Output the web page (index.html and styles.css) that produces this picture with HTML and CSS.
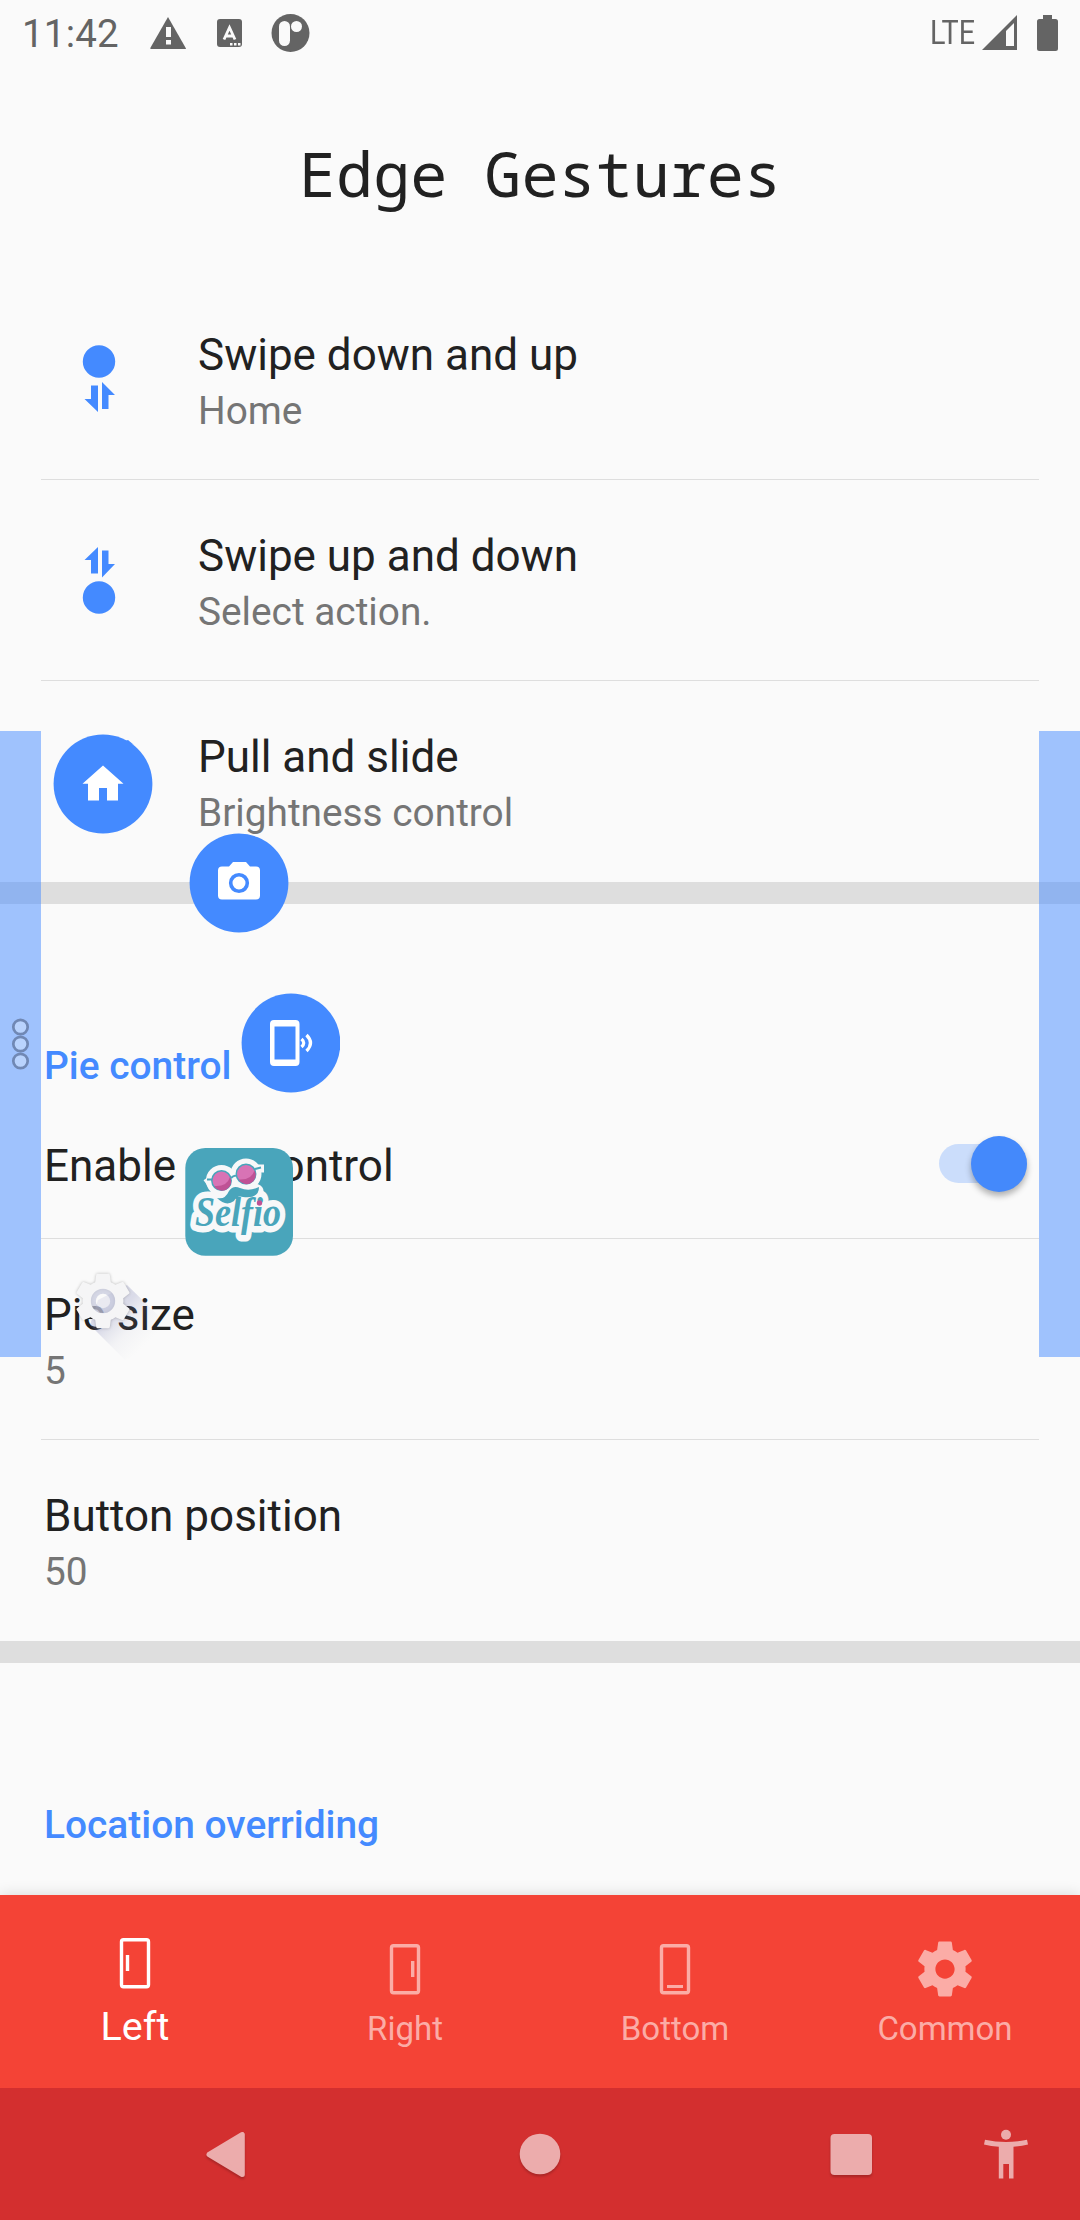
FILE: index.html
```html
<!DOCTYPE html>
<html lang="en">
<head>
<meta charset="utf-8">
<title>Edge Gestures</title>
<link rel="stylesheet" href="styles.css">
</head>
<body>
<div class="screen">
  <header class="status">
    <span class="clock">11:42</span>
    <svg class="st-icons" width="170" height="66" viewBox="0 0 170 66">
      <path fill="#646464" d="M18 17 36 48.500Q36 49 35 49H1Q0 49 .3 48Z"/>
      <path fill="#fafafa" d="M16 27h5v10h-5zM16 40h5v4.500h-5z"/>
      <rect x="67" y="19" width="25" height="28" rx="3" fill="#646464"/>
      <path d="M74 39.500 79.500 27.500 85 39.500M76 36h7" fill="none" stroke="#fafafa" stroke-width="2.800"/>
      <path fill="#fafafa" d="M80 43h2.500v2.500H80zM84 43h2.500v2.500H84zM88 43h2.500v2.500H88z"/>
      <circle cx="140.500" cy="33" r="19" fill="#646464"/>
      <rect x="129" y="21" width="11" height="25" rx="5.500" fill="#fafafa"/>
      <circle cx="146.500" cy="26.500" r="5.500" fill="#fafafa"/>
    </svg>
    <span class="spacer"></span>
    <span class="lte">LTE</span>
    <svg class="st-right" width="80" height="66" viewBox="0 0 80 66">
      <path fill="#646464" fill-rule="evenodd" d="M2 50 37 15V50ZM26 31V46H34V23Z"/>
      <path fill="#646464" d="M63 15h9v4h3.500q2.500 0 2.500 2.500v27q0 2.500-2.500 2.500h-16q-2.500 0-2.500-2.500v-27q0-2.500 2.500-2.500H63z"/>
    </svg>
  </header>

  <h1 class="title">Edge Gestures</h1>

  <main class="content">
    <div class="row">
      <svg class="row-icon" width="116" height="200" viewBox="0 0 116 200" fill="#448aff">
        <circle cx="58" cy="82.500" r="16.200"/>
        <path d="M50 106.500h7V133L43.500 120H50zM61 103 74 116h-6.500v14H61z"/>
      </svg>
      <div class="row-text"><div class="name">Swipe down and up</div><div class="sub">Home</div></div>
    </div>
    <div class="row">
      <svg class="row-icon" width="116" height="200" viewBox="0 0 116 200" fill="#448aff">
        <path d="M57 67v26.500h-7V80h-6.500zM61 70.500h6.500V84H74L61 97.500z"/>
        <circle cx="58" cy="117.500" r="16.200"/>
      </svg>
      <div class="row-text"><div class="name">Swipe up and down</div><div class="sub">Select action.</div></div>
    </div>
    <div class="row last">
      <span class="row-icon-gap"></span>
      <div class="row-text"><div class="name">Pull and slide</div><div class="sub">Brightness control</div></div>
    </div>
    <div class="band"></div>
    <h2 class="section">Pie control</h2>
    <div class="row compact">
      <div class="name">Enable pie control</div>
      <span class="toggle"><span class="thumb"></span></span>
    </div>
    <div class="row">
      <div class="row-text"><div class="name">Pie size</div><div class="sub">5</div></div>
    </div>
    <div class="row last">
      <div class="row-text"><div class="name">Button position</div><div class="sub">50</div></div>
    </div>
    <div class="band"></div>
    <h2 class="section">Location overriding</h2>
  </main>

  <nav class="tabs">
    <div class="tab active">
      <svg width="66" height="66" viewBox="0 0 66 66"><rect x="19.500" y="9.700" width="27" height="47" rx="2" fill="none" stroke="currentColor" stroke-width="3.400"/><path d="M25.500 25v16" stroke="currentColor" stroke-width="3.400"/></svg>
      <span>Left</span>
    </div>
    <div class="tab">
      <svg width="66" height="66" viewBox="0 0 66 66"><rect x="19.500" y="9.700" width="27" height="47" rx="2" fill="none" stroke="currentColor" stroke-width="3.400"/><path d="M40.700 25v16" stroke="currentColor" stroke-width="3.400"/></svg>
      <span>Right</span>
    </div>
    <div class="tab">
      <svg width="66" height="66" viewBox="0 0 66 66"><rect x="19.500" y="9.700" width="27" height="47" rx="2" fill="none" stroke="currentColor" stroke-width="3.400"/><path d="M25 50.500h16" stroke="currentColor" stroke-width="3"/></svg>
      <span>Bottom</span>
    </div>
    <div class="tab">
      <svg width="66" height="66" viewBox="0 0 24 24"><path fill="currentColor" d="M19.430 12.980c.04-.32.07-.64.07-.98s-.03-.66-.07-.98l2.110-1.650c.19-.15.24-.42.12-.64l-2-3.460c-.12-.22-.39-.3-.61-.22l-2.490 1c-.52-.4-1.080-.73-1.690-.98l-.38-2.650C14.460 2.180 14.250 2 14 2h-4c-.25 0-.46.18-.49.42l-.38 2.650c-.61.25-1.170.59-1.690.98l-2.490-1c-.23-.09-.49 0-.61.22l-2 3.460c-.13.22-.07.49.12.64l2.110 1.650c-.04.32-.07.65-.07.98s.03.66.07.98l-2.110 1.650c-.19.15-.24.42-.12.64l2 3.460c.12.22.39.3.61.22l2.490-1c.52.4 1.080.73 1.690.98l.38 2.650c.03.24.24.42.49.42h4c.25 0 .46-.18.49-.42l.38-2.650c.61-.25 1.170-.59 1.690-.98l2.490 1c.23.09.49 0 .61-.22l2-3.460c.12-.22.07-.49-.12-.64l-2.110-1.650zM12 15.500c-1.930 0-3.500-1.570-3.500-3.500s1.570-3.500 3.500-3.500 3.500 1.570 3.500 3.500-1.570 3.500-3.500 3.500z"/></svg>
      <span>Common</span>
    </div>
  </nav>

  <footer class="sysnav">
    <svg width="60" height="60" viewBox="0 0 60 60"><path d="M10 30.500 43.300 10.500V50.500Z" fill="#ecacac" stroke="#ecacac" stroke-width="5" stroke-linejoin="round"/></svg>
    <svg width="60" height="60" viewBox="0 0 60 60"><circle cx="30" cy="30" r="20.300" fill="#ecacac"/></svg>
    <svg width="60" height="60" viewBox="0 0 60 60"><rect x="9.500" y="10" width="41.500" height="41" rx="4" fill="#ecacac"/></svg>
    <svg class="a11y" width="60" height="60" viewBox="0 0 60 60" fill="#ecacac"><circle cx="30" cy="10.700" r="5"/><path d="M9 15.700Q30 20.300 51 15.700L52 20.500Q45 22.300 37.500 22.700V54.500H33V40H27.300V54.500H22.800V22.700Q15 22.300 8 20.500Z"/></svg>
  </footer>

  <div class="edge edge-left">
    <svg width="41" height="60" viewBox="0 0 41 60" fill="rgba(255,255,255,.28)" stroke="#7088b4" stroke-width="2.700"><circle cx="20.500" cy="13" r="7.200"/><circle cx="20.500" cy="30" r="7.200"/><circle cx="20.500" cy="47" r="7.200"/></svg>
  </div>
  <div class="edge edge-right"></div>

  <svg class="pie" width="300" height="680" viewBox="40 720 300 680">
    <defs>
      <linearGradient id="cast" gradientUnits="userSpaceOnUse" x1="103" y1="1301" x2="146" y2="1344"><stop offset=".3" stop-color="#7478b0" stop-opacity=".24"/><stop offset=".65" stop-color="#a0a4c0" stop-opacity=".08"/><stop offset="1" stop-color="#a0a4b8" stop-opacity="0"/></linearGradient>
    </defs>
    <circle cx="103" cy="784" r="49.400" fill="#448aff"/>
    <path d="M125 741l3-1 6 5z" fill="#448aff"/>
    <path fill="#fff" d="M103 765.500 123.500 783.700H118V800.500H107V788H99V800.500H88V783.700H82.500Z"/>
    <circle cx="239" cy="883" r="49.400" fill="#448aff"/>
    <path fill="#fff" d="M233 862h13l4 4.500h6q4 0 4 4v25q0 4-4 4h-34q-4 0-4-4v-25q0-4 4-4h7z"/>
    <circle cx="239" cy="883" r="8.300" fill="#fff" stroke="#448aff" stroke-width="3.600"/>
    <circle cx="291" cy="1043" r="49.400" fill="#448aff"/>
    <path fill="#fff" fill-rule="evenodd" d="M274 1020h21.500q4 0 4 4v38q0 4-4 4H274q-4 0-4-4v-38q0-4 4-4zM274.500 1026.500v33h21v-33z"/>
    <path d="M301.500 1039q4.500 4 0 8M306.500 1035q8 8 0 16" fill="none" stroke="#fff" stroke-width="3.200"/>
    <rect x="185.300" y="1148" width="107.700" height="107.800" rx="20" fill="#49a5bb"/>
    <g fill="#f7f8f9" stroke="#f7f8f9" stroke-width="6" stroke-linejoin="round">
      <circle cx="221.500" cy="1180.500" r="12.500"/><circle cx="246" cy="1174" r="12.500"/>
      <path d="M206 1178.500l5 7M261 1164.500l0 8M210 1181l10-8M248 1165l12 3"/>
      <path d="M216 1199l12-8q5-6 10-3 12 2 19-1 5 2 3 8l6 12-25 10-34-6z"/>
    </g>
    <text class="selfio" x="238" y="1226" text-anchor="middle" textLength="86" lengthAdjust="spacingAndGlyphs">Selfio</text>
    <path d="M207 1179.500l6 0M231 1178q3-3 5-2M255 1169l6-1.500" fill="none" stroke="#49a5bb" stroke-width="2"/>
    <g stroke="#49a5bb" stroke-width="1.500"><circle cx="221.500" cy="1180.500" r="9.700" fill="#d873b5"/><circle cx="246" cy="1174" r="9.700" fill="#d873b5"/></g>
    <path fill="#bf5295" d="M230 1177a9 9 0 0 1-16 9q13 1 16-9zM254.500 1170.500a9 9 0 0 1-16 9q13 1 16-9z"/>
    <path fill="#49a5bb" d="M217 1198q8 2 12-7 4-6 11-3 9 4 19-1 0 12-16 10-6-2-9 4-8 6-17-3z"/>
    <circle cx="259.500" cy="1203" r="2.700" fill="#bf5295"/>
    <path fill="url(#cast)" d="M127 1285 168 1325 160 1345 125 1360 90 1325 98 1300z"/>
    <g transform="translate(103 1301) scale(2.720) translate(-12 -12)">
      <path class="gear" d="M19.430 12.980c.04-.32.07-.64.07-.98s-.03-.66-.07-.98l2.110-1.650c.19-.15.24-.42.12-.64l-2-3.460c-.12-.22-.39-.3-.61-.22l-2.490 1c-.52-.4-1.080-.73-1.690-.98l-.38-2.650C14.460 2.180 14.250 2 14 2h-4c-.25 0-.46.18-.49.42l-.38 2.650c-.61.25-1.170.59-1.690.98l-2.490-1c-.23-.09-.49 0-.61.22l-2 3.460c-.13.22-.07.49.12.64l2.110 1.650c-.04.32-.07.65-.07.98s.03.66.07.98l-2.110 1.650c-.19.15-.24.42-.12.64l2 3.460c.12.22.39.3.61.22l2.490-1c.52.4 1.080.73 1.690.98l.38 2.650c.03.24.24.42.49.42h4c.25 0 .46-.18.49-.42l.38-2.650c.61-.25 1.170-.59 1.690-.98l2.490 1c.23.09.49 0 .61-.22l2-3.460c.12-.22.07-.49-.12-.64l-2.110-1.650zM12 16.400a4.400 4.400 0 1 1 0-8.800 4.400 4.400 0 0 1 0 8.800z"/>
    </g>
    <circle cx="103" cy="1301" r="9.700" fill="none" stroke="#c4c7dc" stroke-opacity=".7" stroke-width="5"/>
    <circle cx="103" cy="1301" r="7.200" fill="#fafafa" fill-opacity=".5"/>
  </svg>
</div>
</body>
</html>
```
FILE: styles.css
```css
* { box-sizing: border-box; }
body { margin: 0; background: #fafafa; font-family: Roboto, sans-serif; color: #212121; }
.screen { position: relative; width: 1080px; height: 2220px; overflow: hidden; display: flex; flex-direction: column; }

.status { height: 66px; flex: none; display: flex; color: #646464; line-height: 68px; padding: 0 20px 0 22px; }
.clock { font-size: 38.5px; width: 128px; letter-spacing: .2px; }
.spacer { flex: 1; }
.lte { font-size: 33px; line-height: 65px; width: 50px; transform: scaleX(.87); transform-origin: 0 0; }
.st-right { flex: none; }

.title { margin: 0; height: 213px; flex: none; font: 400 61.8px/214px "Droid Sans Mono", "Noto Sans Mono", "DejaVu Sans Mono", monospace; text-align: center; }

.content { flex: 1; min-height: 0; overflow: hidden; }
.row { height: 201px; margin: 0 41px; border-bottom: 1px solid #dedede; display: flex; }
.row.last { border-bottom-color: transparent; }
.row.compact { height: 150px; align-items: center; justify-content: space-between; padding: 0 12px 0 3px; }
.row.compact .name { padding-top: 5px; }
.row-text { padding: 50px 0 0 3px; }
.row-icon { flex: none; margin-right: 38px; }
.row-icon-gap { width: 154px; }
.name { font-size: 44px; line-height: 52px; white-space: nowrap; }
.sub { font-size: 38.8px; line-height: 45px; margin-top: 7px; color: #757575; white-space: nowrap; }
.band { height: 22px; background: #dedede; }
.section { margin: 0; height: 185px; padding: 139px 44px 0; font-size: 38.9px; line-height: 45px; font-weight: 500; color: #448aff; }
.toggle { width: 88px; height: 39px; border-radius: 20px; background: #cbddfb; display: flex; align-items: center; justify-content: flex-end; }
.thumb { width: 56px; height: 56px; border-radius: 50%; background: #4489fb; flex: none; box-shadow: 0 4px 6px rgba(0,0,0,.3); }

.tabs { height: 193px; flex: none; background: #f44336; display: flex; box-shadow: 0 0 14px rgba(0,0,0,.14); position: relative; }
.tab { flex: 1; display: flex; flex-direction: column; align-items: center; padding-top: 41px; color: #fbaca6; font-size: 33px; line-height: 40px; }
.tab span { margin-top: 7px; }
.tab.active { padding-top: 35px; color: #fff; font-size: 39.5px; }
.tab.active span { margin-top: 11px; }

.sysnav { height: 132px; flex: none; background: #d32f2f; display: flex; align-items: center; padding-left: 199px; position: relative; }
.sysnav svg { margin-right: 251px; flex: none; filter: drop-shadow(0 2px 1px rgba(0,0,0,.2)); }
.sysnav svg:nth-child(3) { margin-right: 95px; }
.sysnav .a11y { margin-right: 0; filter: none; }

.edge { position: absolute; top: 731px; width: 41px; height: 626px; background: rgba(68,138,255,.5); }
.edge-left { left: 0; display: flex; align-items: center; }
.edge-right { right: 0; }
.pie { position: absolute; left: 40px; top: 720px; }
.selfio { font: italic 700 43px "Liberation Serif", serif; fill: #49a5bb; stroke: #f7f8f9; stroke-width: 13px; stroke-linejoin: round; paint-order: stroke; }
.gear { fill: #f5f5f6; filter: drop-shadow(0 .4px .5px rgba(0,0,0,.25)); }
```
